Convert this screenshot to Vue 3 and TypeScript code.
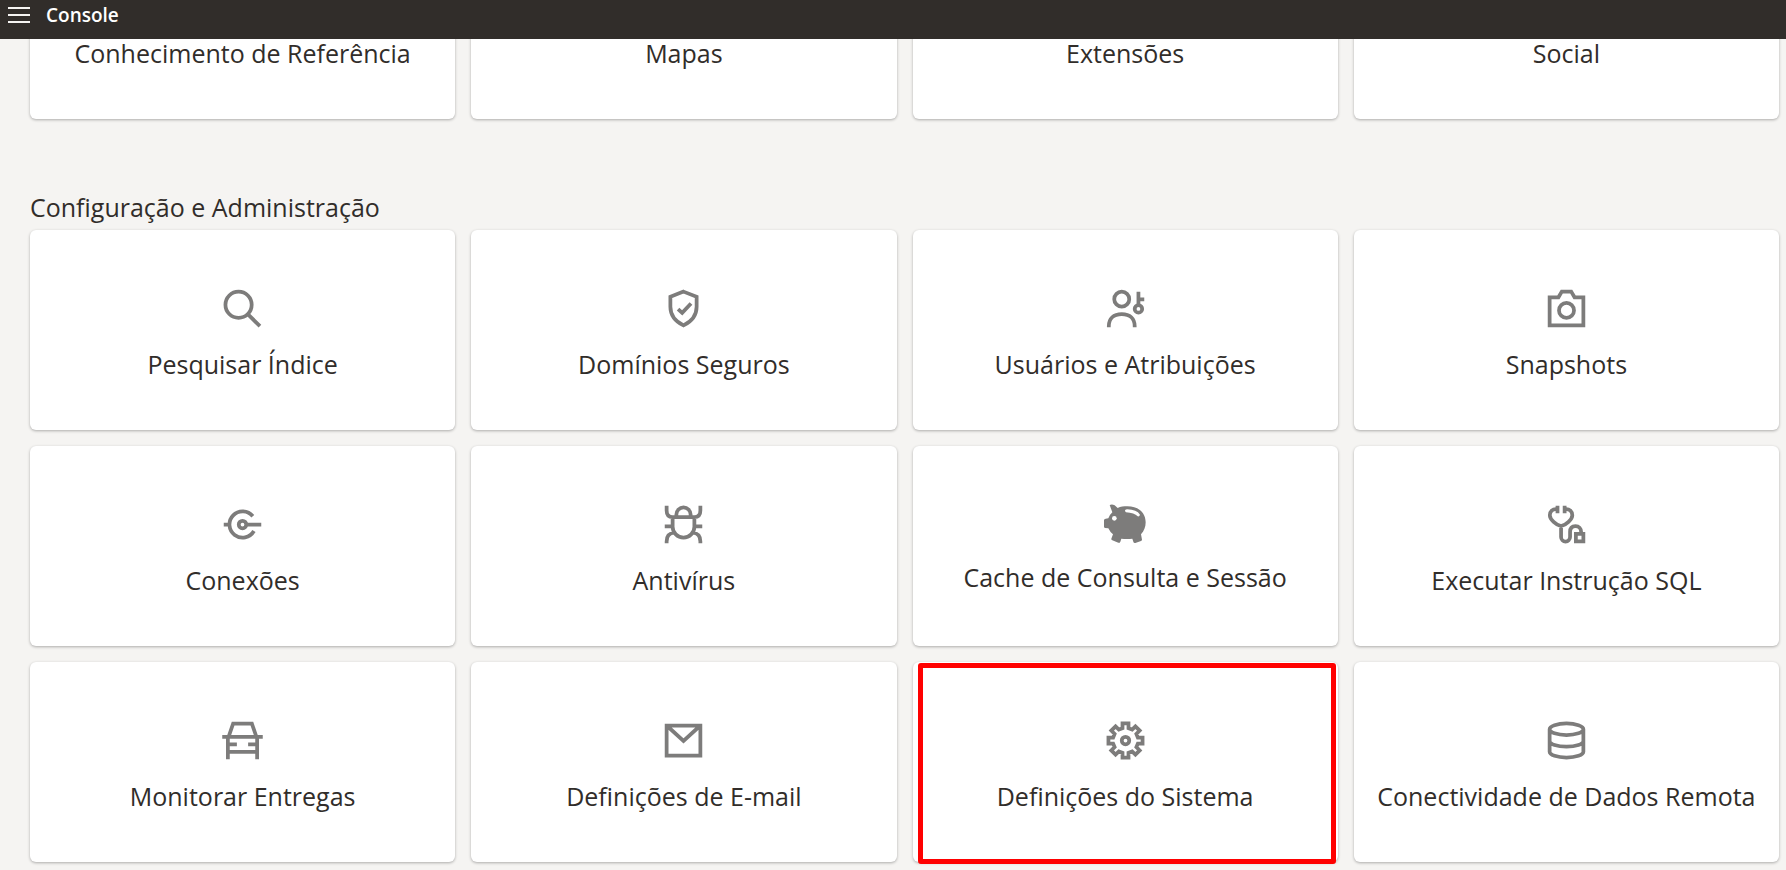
<script setup lang="ts">
interface Shape {
  d: string
  width?: number
}

interface Tile {
  label: string
  icon: Shape[]
  solid?: boolean
  marked?: boolean
}

const ring = (cx: number, cy: number, r: number): string =>
  `M${cx - r} ${cy}a${r} ${r} 0 1 0 ${2 * r} 0a${r} ${r} 0 1 0 ${-2 * r} 0z`

// Outline of a cog with eight square teeth, centred in the 24-unit icon box.
function cogOutline(): string {
  const points: string[] = []
  for (let tooth = 0; tooth < 8; tooth++) {
    const angle = (tooth * Math.PI) / 4
    for (const [x, y] of [[-1.6, -6.6], [-1.6, -9.1], [1.6, -9.1], [1.6, -6.6]]) {
      const px = 12 + x * Math.cos(angle) - y * Math.sin(angle)
      const py = 12 + x * Math.sin(angle) + y * Math.cos(angle)
      points.push(`${px.toFixed(2)} ${py.toFixed(2)}`)
    }
  }
  return `M${points.join('L')}z`
}

const upperTiles: string[] = ['Conhecimento de Referência', 'Mapas', 'Extensões', 'Social']

const tiles: Tile[] = [
  { label: 'Pesquisar Índice', icon: [{ d: ring(9.9, 10, 7) + 'M14.8 15l6.5 6.4' }] },
  {
    label: 'Domínios Seguros',
    icon: [{ d: 'M12 3l7 2.7V11c0 4.6-3 8-7 10-4-2-7-5.4-7-10V5.7zM9.1 12.3l2.2 2L16 9.3' }],
  },
  {
    label: 'Usuários e Atribuições',
    icon: [
      { d: ring(10, 7, 4) + 'M3.1 22v-.6C3.1 17.4 5.6 15 10 15s6.9 2.4 6.9 6.4v.6' },
      { d: ring(18.9, 12.2, 2) + 'M18.9 3v7M19 7.1h3' },
    ],
  },
  { label: 'Snapshots', icon: [{ d: 'M3 6h4.7l1.8-3h5l1.8 3H21v15H3z' + ring(12, 13, 4) }] },
  {
    label: 'Conexões',
    icon: [{ d: 'M17.5 7.6A7 7 0 1 0 18.1 15.5M2 12h3M14.5 12H22' + ring(12, 12, 2) }],
  },
  {
    label: 'Antivírus',
    icon: [
      {
        d: 'M6.2 8h11.6v5.2a5.8 5.8 0 0 1-11.6 0zM8.2 8V6.7a3.8 3.8 0 0 1 7.6 0V8M3 2v2.5C3 6.7 4.2 8 6.2 8M21 2v2.5C21 6.7 19.8 8 17.8 8M2 13h4M22 13h-4M3 22v-1c0-2.6 1.3-4.4 4-4.6M21 22v-1c0-2.6-1.3-4.4-4-4.6',
      },
    ],
  },
  { label: 'Cache de Consulta e Sessão', icon: [], solid: true },
  {
    label: 'Executar Instrução SQL',
    icon: [
      {
        d: 'M7.2 3.9C4.4 3.5 3.1 5.2 3.1 7.1c0 2.2 3.4 5.3 6 5.8 2.6-.5 6-3.6 6-5.8 0-1.9-1.3-3.6-4.1-3.2M9.1 12.9v5.8a2.4 2.4 0 0 0 4.8 0V16c0-2 1.1-3.1 2.9-3.1s3 1.2 3 3.1v1M17 17h4v4h-4z',
      },
      { d: 'M7.2 2v4M11 2v4', width: 2 },
    ],
  },
  {
    label: 'Monitorar Entregas',
    icon: [{ d: 'M4.6 10L7 3h10l2.4 7M1.2 10h21.6M4.2 10v12M19.8 10v12M4 18h16M5 14h4M15 14h4' }],
  },
  { label: 'Definições de E-mail', icon: [{ d: 'M3 4h18v16H3zM3 4l9 8.2L21 4' }] },
  {
    label: 'Definições do Sistema',
    icon: [{ d: cogOutline() }, { d: ring(12, 12, 2) }],
    marked: true,
  },
  {
    label: 'Conectividade de Dados Remota',
    icon: [
      {
        d: 'M3 6c0-1.7 4-3.1 9-3.1S21 4.3 21 6s-4 3.1-9 3.1S3 7.7 3 6zM3 6v12c0 1.7 4 3.1 9 3.1s9-1.4 9-3.1V6M3 12.2c0 1.7 4 3.1 9 3.1s9-1.4 9-3.1',
      },
    ],
  },
]
</script>

<template>
  <div class="page">
    <header class="bar">
      <button class="menu" type="button" aria-label="Menu">
        <svg viewBox="0 0 22 16" aria-hidden="true">
          <path d="M0 1h22M0 8h22M0 15h22" />
        </svg>
      </button>
      <h1 class="product">Console</h1>
    </header>

    <main class="content">
      <nav class="grid upper">
        <a v-for="label in upperTiles" :key="label" class="tile" href="#">
          <span class="icon"></span>
          <span class="label">{{ label }}</span>
        </a>
      </nav>

      <section>
        <h2 class="heading">Configuração e Administração</h2>
        <nav class="grid">
          <a
            v-for="tile in tiles"
            :key="tile.label"
            class="tile"
            :class="{ marked: tile.marked }"
            href="#"
          >
            <svg v-if="tile.solid" class="icon solid" viewBox="67 37 126 126" aria-hidden="true">
              <path
                d="M84 46q7-4 15 1l9 8c9-4 18-5 29-5 33 0 55 19 55 48 0 14-5 26-14 36l3 16q0 3-3 4l-17 6q-5 1-6-4l-3-9q-16 2-33 0l-3 9q-2 5-6 3l-18-7q-4-2-3-5l5-13q-9-7-14-18l-10-1q-3-1-3-4V92q0-5 5-5l8-1q5-12 12-18z"
              />
              <circle class="cut" cx="98" cy="86" r="7" />
              <path class="cut" d="M130 62q2-3 7-3 28 1 38 16-2 7-7 5-10-10-35-12-3-2-3-6z" />
            </svg>
            <svg v-else class="icon" viewBox="0 0 24 24" aria-hidden="true">
              <path
                v-for="shape in tile.icon"
                :key="shape.d"
                :d="shape.d"
                :stroke-width="shape.width ?? 2"
              />
            </svg>
            <span class="label">{{ tile.label }}</span>
          </a>
        </nav>
      </section>
    </main>
  </div>
</template>

<style>
body {
  margin: 0;
  background: #f5f4f2;
}
</style>

<style scoped>
.page {
  min-height: 100vh;
  box-sizing: border-box;
  overflow: hidden;
  color: #312d2a;
  font-family: "Open Sans", "Noto Sans", sans-serif;
}

.bar {
  position: relative;
  z-index: 1;
  display: flex;
  align-items: flex-start;
  gap: 16px;
  height: 39px;
  padding-left: 8px;
  box-sizing: border-box;
  background: #312d2a;
  color: #fff;
}

.menu {
  display: flex;
  margin: 0;
  padding: 7px 0;
  border: 0;
  background: none;
  cursor: pointer;
}

.menu svg {
  width: 22px;
  height: 16px;
  fill: none;
  stroke: #f5f4f2;
  stroke-width: 2;
}

.product {
  margin: 0;
  font-size: 19px;
  line-height: 30px;
  font-weight: 600;
}

.content {
  padding: 0 7px 8px 30px;
}

.grid {
  display: grid;
  grid-template-columns: repeat(4, minmax(0, 1fr));
  gap: 16px;
}

.upper {
  margin-top: -120px;
}

.tile {
  position: relative;
  display: flex;
  flex-direction: column;
  align-items: center;
  gap: 17px;
  height: 200px;
  padding-top: 56px;
  box-sizing: border-box;
  border-radius: 6px;
  background: #fff;
  box-shadow: 0 1px 3px rgba(0, 0, 0, 0.3);
  color: inherit;
  text-decoration: none;
}

.marked::after {
  content: "";
  position: absolute;
  inset: 1px 2px -2px 5px;
  border: 5px solid #f00;
  border-radius: 3px;
}

.icon {
  flex: none;
  width: 45px;
  height: 45px;
  fill: none;
  stroke: #7d7c7b;
}

.solid {
  width: 42px;
  height: 42px;
  fill: #7d7c7b;
  stroke: none;
}

.cut {
  fill: #fff;
}

.label {
  font-size: 25px;
  line-height: 32px;
  white-space: nowrap;
}

.heading {
  margin: 0;
  padding: 72px 0 7px;
  font-size: 25px;
  line-height: 32px;
  font-weight: 400;
}
</style>
